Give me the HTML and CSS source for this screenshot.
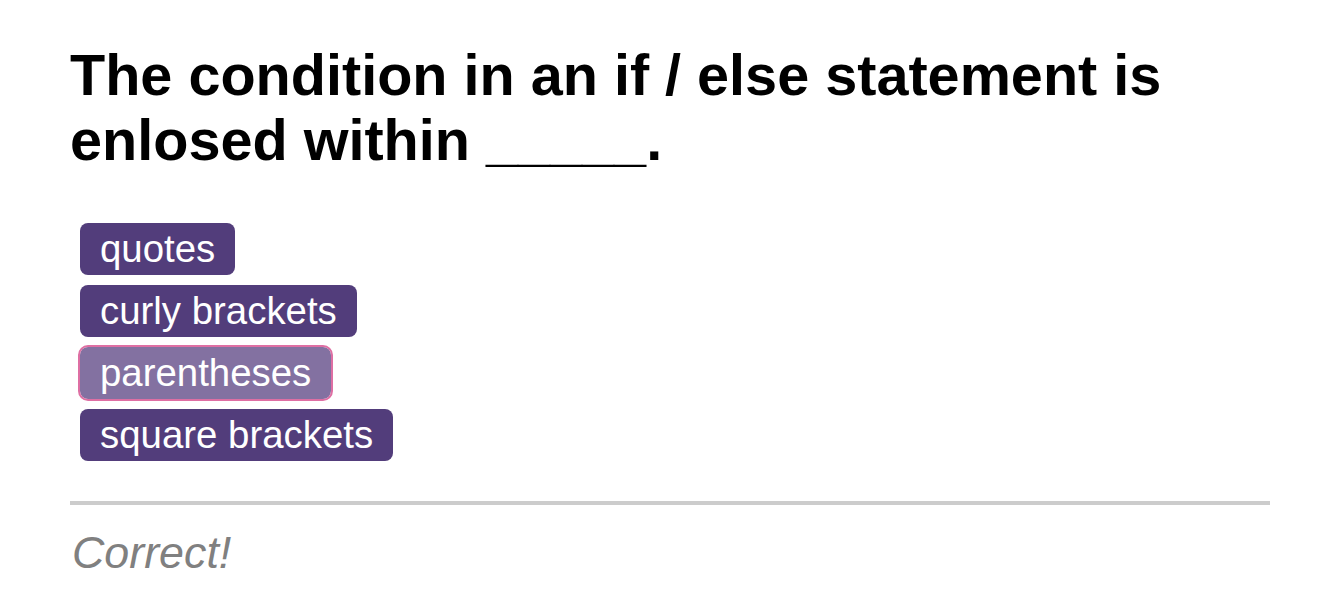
FILE: index.html
```html
<!DOCTYPE html>
<html lang="en">
<head>
<meta charset="utf-8">
<title>Quiz</title>
<link rel="stylesheet" href="styles.css">
</head>
<body>
<div class="quiz">
  <h1 class="question">The condition in an if / else statement is enlosed within _____.</h1>
  <div class="answers">
    <button class="answer">quotes</button>
    <button class="answer">curly brackets</button>
    <button class="answer selected">parentheses</button>
    <button class="answer">square brackets</button>
  </div>
  <div class="divider"></div>
  <p class="feedback">Correct!</p>
</div>
</body>
</html>
```

FILE: styles.css
```css
html, body {
  margin: 0;
  padding: 0;
  background: #ffffff;
}
body {
  font-family: "Liberation Sans", Arial, Helvetica, sans-serif;
}
.quiz {
  width: 1200px;
  padding: 43px 70px 0;
}
.question {
  margin: 0;
  font-size: 57.6px;
  line-height: 65px;
  font-weight: 700;
  color: #000000;
}
.answers {
  display: flex;
  flex-direction: column;
  align-items: flex-start;
  gap: 10px;
  margin: 50px 0 0 10px;
}
.answer {
  font-family: "Liberation Sans", Arial, Helvetica, sans-serif;
  font-size: 38.4px;
  line-height: 44px;
  padding: 4px 20px;
  border: none;
  border-radius: 8px;
  background: #523d7b;
  color: #ffffff;
  cursor: pointer;
  margin: 0;
}
.answer.selected {
  background: #8371a1;
  outline: 2px solid #de6fa3;
}
.divider {
  height: 4px;
  background: #cccccc;
  margin-top: 40px;
}
.feedback {
  margin: 22px 0 0 2px;
  font-size: 44.8px;
  font-style: italic;
  color: #808080;
}
```
